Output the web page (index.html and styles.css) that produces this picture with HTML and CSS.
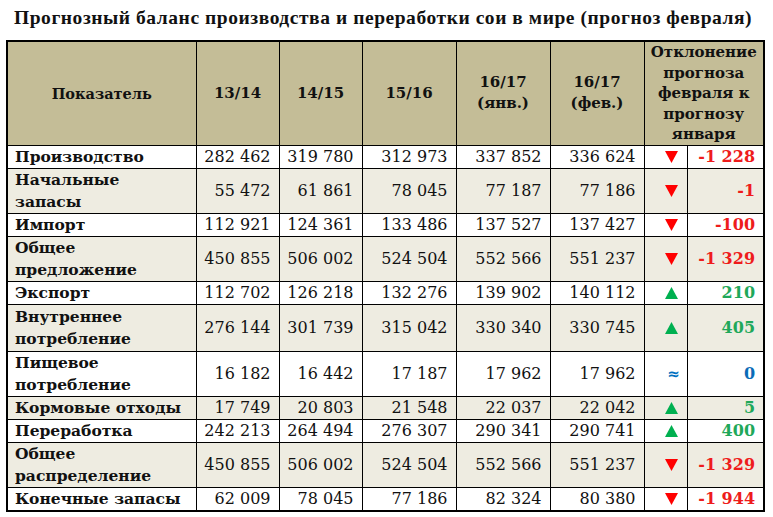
FILE: index.html
```html
<!DOCTYPE html>
<html lang="ru">
<head>
<meta charset="utf-8">
<title>Прогнозный баланс</title>
<link rel="stylesheet" href="styles.css">
</head>
<body>
<h1 class="title">Прогнозный баланс производства и переработки сои в мире (прогноз февраля)</h1>
<table class="grid">
  <colgroup>
    <col class="c-name"><col class="c-n"><col class="c-n"><col class="c-w"><col class="c-w"><col class="c-w"><col class="c-arr"><col class="c-dev">
  </colgroup>
  <thead>
    <tr class="head">
      <th>Показатель</th>
      <th>13/14</th>
      <th>14/15</th>
      <th>15/16</th>
      <th>16/17<br>(янв.)</th>
      <th>16/17<br>(фев.)</th>
      <th colspan="2" class="dev-head">Отклонение прогноза февраля к прогнозу января</th>
    </tr>
  </thead>
  <tbody>
    <tr class="r1"><td class="name">Производство</td><td>282 462</td><td>319 780</td><td>312 973</td><td>337 852</td><td>336 624</td><td class="arr"><svg class="tri down" viewBox="0 0 13 12"><path d="M0 0H13L6.5 12Z"/></svg></td><td class="dev red">-1 228</td></tr>
    <tr class="r2 alt"><td class="name">Начальные<br>запасы</td><td>55 472</td><td>61 861</td><td>78 045</td><td>77 187</td><td>77 186</td><td class="arr"><svg class="tri down" viewBox="0 0 13 12"><path d="M0 0H13L6.5 12Z"/></svg></td><td class="dev red">-1</td></tr>
    <tr class="r1"><td class="name">Импорт</td><td>112 921</td><td>124 361</td><td>133 486</td><td>137 527</td><td>137 427</td><td class="arr"><svg class="tri down" viewBox="0 0 13 12"><path d="M0 0H13L6.5 12Z"/></svg></td><td class="dev red">-100</td></tr>
    <tr class="r2 alt"><td class="name">Общее<br>предложение</td><td>450 855</td><td>506 002</td><td>524 504</td><td>552 566</td><td>551 237</td><td class="arr"><svg class="tri down" viewBox="0 0 13 12"><path d="M0 0H13L6.5 12Z"/></svg></td><td class="dev red">-1 329</td></tr>
    <tr class="r1"><td class="name">Экспорт</td><td>112 702</td><td>126 218</td><td>132 276</td><td>139 902</td><td>140 112</td><td class="arr"><svg class="tri up" viewBox="0 0 13 12"><path d="M6.5 0L13 12H0Z"/></svg></td><td class="dev green">210</td></tr>
    <tr class="r2 alt tall"><td class="name">Внутреннее<br>потребление</td><td>276 144</td><td>301 739</td><td>315 042</td><td>330 340</td><td>330 745</td><td class="arr"><svg class="tri up" viewBox="0 0 13 12"><path d="M6.5 0L13 12H0Z"/></svg></td><td class="dev green">405</td></tr>
    <tr class="r2"><td class="name">Пищевое<br>потребление</td><td>16 182</td><td>16 442</td><td>17 187</td><td>17 962</td><td>17 962</td><td class="arr eq">≈</td><td class="dev blue">0</td></tr>
    <tr class="r1 alt"><td class="name">Кормовые отходы</td><td>17 749</td><td>20 803</td><td>21 548</td><td>22 037</td><td>22 042</td><td class="arr"><svg class="tri up" viewBox="0 0 13 12"><path d="M6.5 0L13 12H0Z"/></svg></td><td class="dev green">5</td></tr>
    <tr class="r1"><td class="name">Переработка</td><td>242 213</td><td>264 494</td><td>276 307</td><td>290 341</td><td>290 741</td><td class="arr"><svg class="tri up" viewBox="0 0 13 12"><path d="M6.5 0L13 12H0Z"/></svg></td><td class="dev green">400</td></tr>
    <tr class="r2 alt"><td class="name">Общее<br>распределение</td><td>450 855</td><td>506 002</td><td>524 504</td><td>552 566</td><td>551 237</td><td class="arr"><svg class="tri down" viewBox="0 0 13 12"><path d="M0 0H13L6.5 12Z"/></svg></td><td class="dev red">-1 329</td></tr>
    <tr class="r1"><td class="name">Конечные запасы</td><td>62 009</td><td>78 045</td><td>77 186</td><td>82 324</td><td>80 380</td><td class="arr"><svg class="tri down" viewBox="0 0 13 12"><path d="M0 0H13L6.5 12Z"/></svg></td><td class="dev red">-1 944</td></tr>
  </tbody>
</table>
</body>
</html>
```

FILE: styles.css
```css
html, body {
  margin: 0;
  padding: 0;
  background: #ffffff;
}
body {
  padding: 7px 0 0 6px;
  font-family: "DejaVu Serif", "Liberation Serif", serif;
  color: #111;
}
.title {
  margin: 0 0 11px 8px;
  font-family: "Liberation Serif", "Times New Roman", serif;
  font-size: 19.5px;
  line-height: 22px;
  font-weight: bold;
  letter-spacing: 0.55px;
  color: #111;
}
.grid {
  border-collapse: collapse;
  table-layout: fixed;
  width: 757px;
  border: 2px solid #000;
}
.c-name { width: 189px; }
.c-n { width: 83px; }
.c-w { width: 94px; }
.c-arr { width: 43px; }
.c-dev { width: 77px; }
.grid th, .grid td {
  border: 1px solid #000;
  padding: 0;
}
.head th {
  background: #c4bd97;
  height: 101px;
  font-size: 15px;
  line-height: 21px;
  font-weight: bold;
  text-align: center;
  vertical-align: middle;
}
.head th:first-child {
  font-size: 14.5px;
}
.head .dev-head {
  vertical-align: top;
  line-height: 20.5px;
}
.grid td {
  font-size: 16px;
  line-height: 22px;
  text-align: right;
  padding-right: 8px;
  vertical-align: middle;
  white-space: nowrap;
}
.r1 td { height: 22px; }
.r2 td { height: 44px; }
.tall td { height: 46px; }
.grid td.name {
  text-align: left;
  padding-left: 7px;
  padding-right: 0;
  font-size: 15.5px;
  font-weight: bold;
}
.alt td { background: #eeece1; }
.grid td.arr {
  text-align: center;
  padding: 0 0 0 11px;
  font-size: 13px;
  line-height: 12px;
}
.tri {
  display: block;
  width: 13px;
  height: 12px;
  margin: 0 auto;
}
.tri.down { fill: #ff0000; }
.tri.up { fill: #00b050; }
.grid td.eq {
  color: #0070c0;
  font-weight: bold;
  font-family: "DejaVu Sans", sans-serif;
  font-size: 15px;
  padding-left: 16px;
}
.grid td.dev {
  font-weight: bold;
  padding-right: 8px;
}
.dev.red { color: #ee1c1c; }
.dev.green { color: #1fa85a; }
.dev.blue { color: #0b6cb7; }
```
